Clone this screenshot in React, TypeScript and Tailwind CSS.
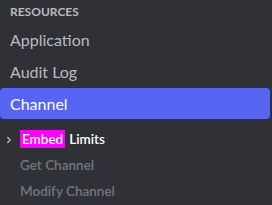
import { ChevronRight } from "lucide-react";

const subItems = [
    { label: "Get Channel" },
    { label: "Modify Channel" },
];

export default function App() {
    return (
        <div
            className="w-[272px] h-[205px] overflow-hidden bg-[#303136] text-[#b9bbbe]"
            style={{ fontFamily: 'Lato, "Noto Sans", sans-serif' }}
        >
            <div className="h-6 pl-2.5 pt-[3px] text-[12px] font-bold uppercase text-[#b9bbbe]">
                Resources
            </div>
            <div className="flex flex-col">
                <div className="h-8 flex items-center pl-2.5 text-[16px]">Application</div>
                <div className="h-8 flex items-center pl-2.5 text-[16px]">Audit Log</div>
                <div className="h-[31px] w-[270px] flex items-center pl-2.5 text-[16px] text-white bg-[#5865f2] rounded-[4px]">
                    Channel
                </div>
            </div>
            <div className="mt-[7px] flex flex-col text-[13.5px] font-semibold">
                <div className="relative h-[26px] flex items-center pl-5 text-white">
                    <ChevronRight
                        className="absolute left-[4px] top-[9px] size-[10px] text-[#b9bbbe]"
                        strokeWidth={3}
                    />
                    <span className="bg-[#ff00ff] px-[2px] leading-[18px]">Embed</span>
                    <span className="ml-1">Limits</span>
                </div>
                {subItems.map((item) => (
                    <div
                        key={item.label}
                        className="h-[26px] flex items-center pl-5 text-[#72767d]"
                    >
                        {item.label}
                    </div>
                ))}
            </div>
        </div>
    );
}
